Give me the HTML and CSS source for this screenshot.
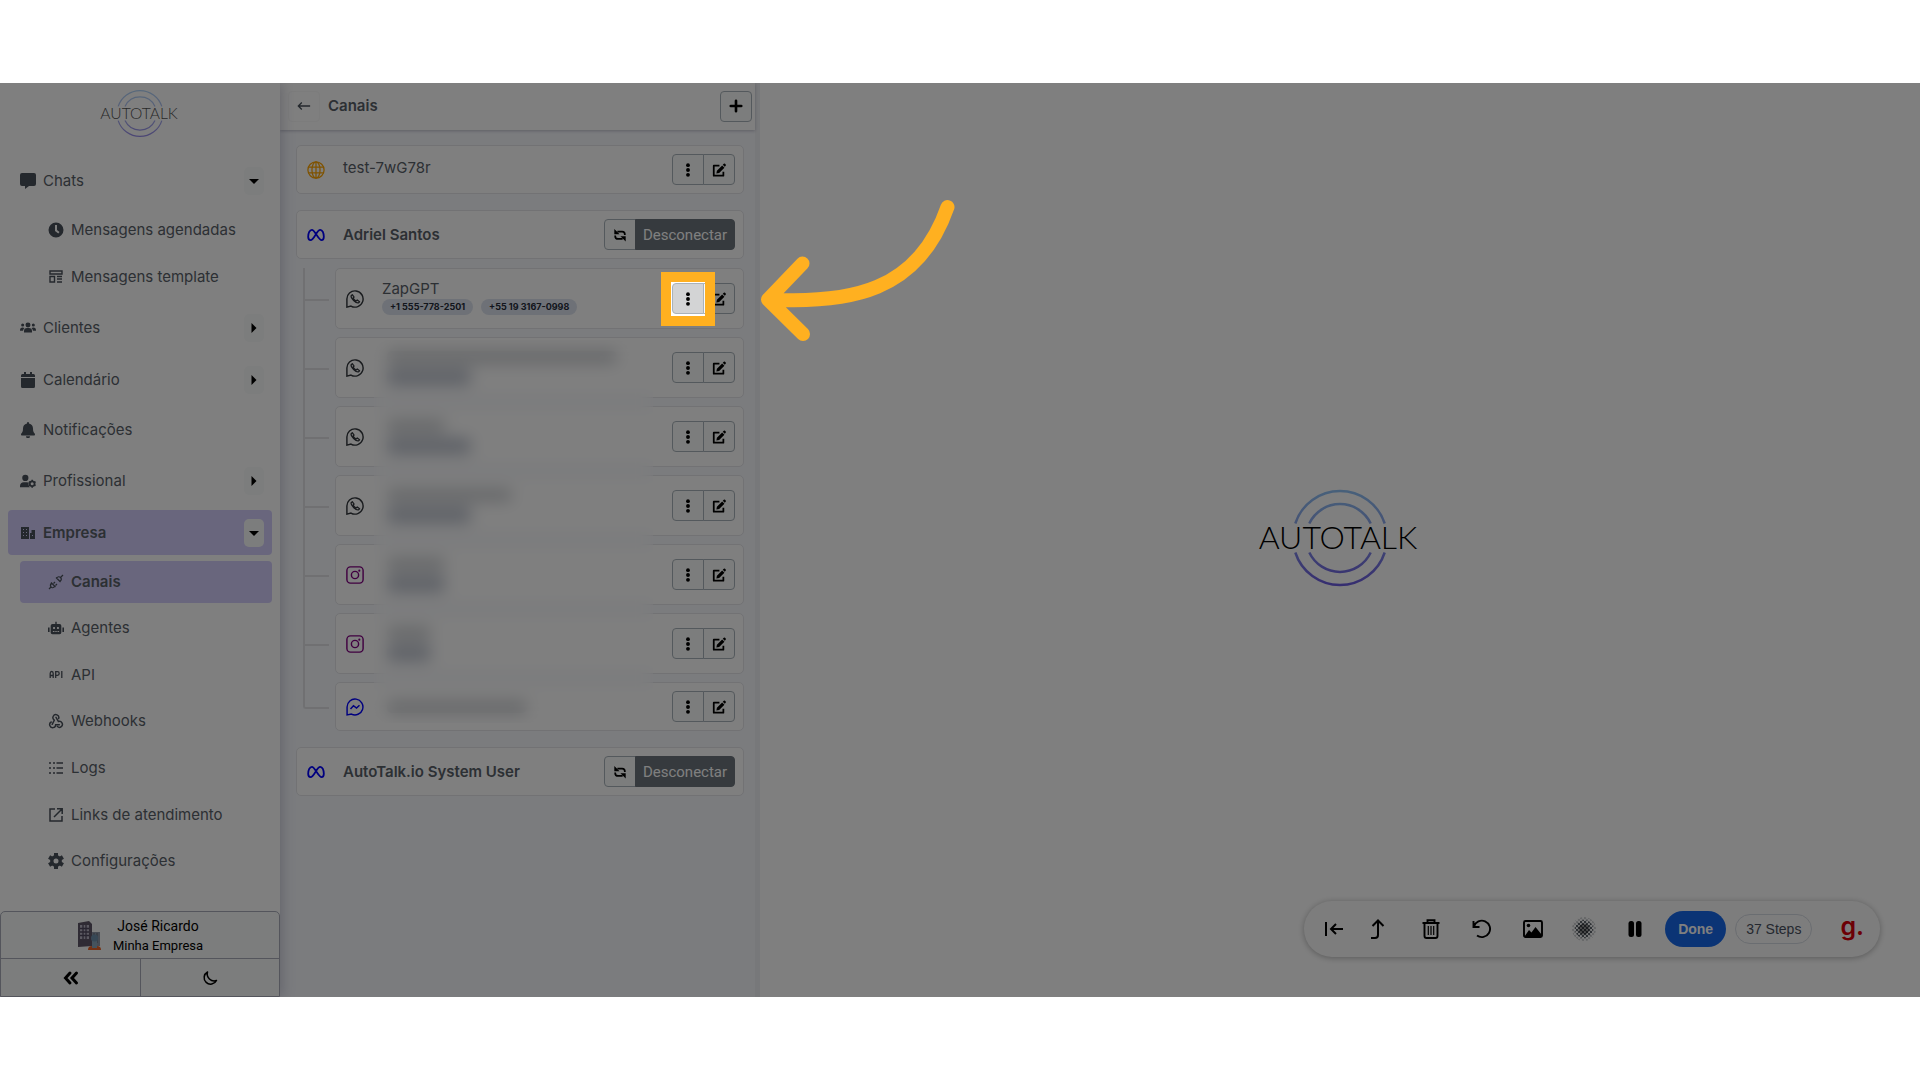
FILE: index.html
```html
<!DOCTYPE html>
<html lang="pt-BR">
  <head>
    <meta charset="UTF-8" />
    <meta name="viewport" content="width=device-width, initial-scale=1.0" />
    <title>Canais</title>
    <link rel="stylesheet" href="styles.css" />
  </head>
  <body>
    <svg class="sprite" aria-hidden="true">
      <defs>
        <linearGradient id="ring" gradientUnits="userSpaceOnUse" x1="0" y1="-47" x2="0" y2="47">
          <stop offset="0" stop-color="#8fc0f5" />
          <stop offset="0.35" stop-color="#8ba6ea" />
          <stop offset="1" stop-color="#6c5ce0" />
        </linearGradient>
        <pattern id="halftone" width="4" height="4" patternUnits="userSpaceOnUse">
          <circle cx="1" cy="1" r="1.200" />
          <circle cx="3" cy="3" r="1.200" />
        </pattern>
      </defs>
      <symbol id="i-chat" viewBox="0 0 16 16"><path d="M2 0h12a2 2 0 0 1 2 2v9a2 2 0 0 1-2 2H9l-4 3v-3H2a2 2 0 0 1-2-2V2a2 2 0 0 1 2-2z" /></symbol>
      <symbol id="i-clock" viewBox="0 0 16 16"><path fill-rule="evenodd" d="M8 .5a7.500 7.500 0 1 0 0 15 7.500 7.500 0 0 0 0-15zM7 3h2v5l2.500 2-1.200 1.500L7 9z" /></symbol>
      <symbol id="i-template" viewBox="0 0 16 16"><path d="M2 2h12v3H2zM2 7.500h4.500V13H2zM9 7.500h5M9 10h5M9 13h5" fill="none" stroke="currentColor" stroke-width="1.400" /></symbol>
      <symbol id="i-users" viewBox="0 0 18 16"><circle cx="9" cy="4.500" r="2.800" /><circle cx="3" cy="4.500" r="1.700" /><circle cx="15" cy="4.500" r="1.700" /><path d="M4.500 13v-1.500A3.500 3.500 0 0 1 8 8h2a3.500 3.500 0 0 1 3.500 3.500V13zM0 10.500A3 3 0 0 1 3 7.500l2 .500a5 5 0 0 0-1.600 3H0zM18 10.500a3 3 0 0 0-3-3l-2 .500a5 5 0 0 1 1.600 3H18z" /></symbol>
      <symbol id="i-calendar" viewBox="0 0 16 16"><path d="M4 0h2v2h4V0h2v2h1.500A1.500 1.500 0 0 1 15 3.500V5H1V3.500A1.500 1.500 0 0 1 2.500 2H4zM1 6h14v8.500a1.500 1.500 0 0 1-1.500 1.500h-11A1.500 1.500 0 0 1 1 14.500z" /></symbol>
      <symbol id="i-bell" viewBox="0 0 16 16"><path d="M7 1a1 1 0 0 1 2 0v.600c2.700.500 4 2.600 4 5 0 3 .800 4 1.700 5 .600.800.200 1.900-.800 1.900H2.100c-1 0-1.400-1.100-.800-1.900.900-1 1.700-2 1.700-5 0-2.400 1.300-4.500 4-5zM6 14.300h4a2 2 0 0 1-4 0z" /></symbol>
      <symbol id="i-usercog" viewBox="0 0 18 16"><circle cx="6" cy="4.500" r="3.500" /><path d="M0 15v-1.500C0 11 1.800 9.300 4.200 9.300h3.600c1 0 1.600.200 2.200.600-1 2 0 4 1.200 5.100z" /><circle cx="13.700" cy="11" r="2.700" fill="none" stroke="currentColor" stroke-width="2" /><path d="M13.700 6.600v1.500M13.700 14v1.500M9.900 8.800l1.300.700M16.200 12.500l1.300.700M9.900 13.200l1.300-.700M16.200 9.500l1.300-.700" stroke="currentColor" stroke-width="1.800" /></symbol>
      <symbol id="i-building" viewBox="0 0 16 16"><path fill-rule="evenodd" d="M1 2h8v12H1zM3 4v1h1V4zM6 4v1h1V4zM3 7v1h1V7zM6 7v1h1V7zM3 10v1h1v-1zM6 10v1h1v-1zM10 8h1.500V5H15v9h-5zM12 10v1h1v-1z" /></symbol>
      <symbol id="i-plug" viewBox="0 0 16 16"><g fill="none" stroke="currentColor" stroke-width="1.200"><path d="M1 15l2.500-2.500M3 8.500l4.500 4.500M3.600 9.200C1.800 10.800 2.300 12 3 13s2.300 1.200 3.800-.600M5.500 9.500l1.500-1.500M7.500 11.500l1.500-1.500M15 1l-2.500 2.500M8 3.500 12.500 8M8.600 4.200C10 2.400 11.300 2.400 12.500 3.500s1.200 2.500-.600 3.900" /></g></symbol>
      <symbol id="i-robot" viewBox="0 0 18 16"><path fill-rule="evenodd" d="M8.200 1h1.600v2.500H13a2 2 0 0 1 2 2V13a2 2 0 0 1-2 2H5a2 2 0 0 1-2-2V5.500a2 2 0 0 1 2-2h3.200zM5.800 7v2h2V7zM10.200 7v2h2V7zM5.500 11.500v1h1.800v-1zM8.200 11.500v1h1.600v-1zM10.700 11.500v1h1.800v-1zM0 7.500h1.800v5H0zM16.200 7.500H18v5h-1.800z" /></symbol>
      <symbol id="i-api" viewBox="0 0 16 16"><path d="M2.200 11V6.500q0-2 1.500-2t1.500 2V11M2.200 8.500h3M7.700 11V4.700h1.800q1.700 0 1.700 1.800t-1.700 1.800H7.700M13.800 4v7" fill="none" stroke="currentColor" stroke-width="1.300" /></symbol>
      <symbol id="i-webhook" viewBox="0 0 24 24"><path d="M4.900 13.500a4.500 4.500 0 1 0 6.600 4h5.500M9.500 10.600a4.400 4.400 0 1 1 6.500-2.400M12 6.500l3.500 6.200a4.500 4.500 0 1 1-1.400 7.600M9.500 10.600 6.300 17" fill="none" stroke="currentColor" stroke-width="2.200" stroke-linecap="round" /></symbol>
      <symbol id="i-logs" viewBox="0 0 16 16"><path d="M1 3h2M1 8h2M1 13h2M5 3h2M5 8h2M5 13h2M8.500 3H15M8.500 8H15M8.500 13H15" stroke="currentColor" stroke-width="1.500" /></symbol>
      <symbol id="i-external" viewBox="0 0 16 16"><path d="M7 2H2v12h12V9M9 1.700h5.200V7M14 2 6 10" fill="none" stroke="currentColor" stroke-width="1.500" /></symbol>
      <symbol id="i-gear" viewBox="0 0 16 16"><circle cx="8" cy="8" r="4.200" fill="none" stroke="currentColor" stroke-width="3.400" /><path d="M8 0v3M8 13v3M1.100 4l2.500 1.500M12.400 10.500l2.500 1.500M1.100 12l2.500-1.500M12.400 5.500 14.900 4" stroke="currentColor" stroke-width="4" /></symbol>
      <symbol id="i-dots" viewBox="0 0 16 16"><circle cx="8" cy="2.500" r="2.200" /><circle cx="8" cy="8" r="2.200" /><circle cx="8" cy="13.500" r="2.200" /></symbol>
      <symbol id="i-edit" viewBox="0 0 16 16"><path d="M8.500 3H2v11.500h11V10" fill="none" stroke="currentColor" stroke-width="2" stroke-linejoin="round" /><path d="M5 12l.600-3.200 6-6 2.600 2.600-6 6zM12.300 2 13.500.900q.700-.600 1.400 0l.700.700q.700.700 0 1.400L14.600 4.200z" /></symbol>
      <symbol id="i-sync" viewBox="0 0 16 16"><path d="M5 4h5.500q3 0 3 3v1M11 12.500H6q-3.500 0-3.500-3.500V8.500" fill="none" stroke="currentColor" stroke-width="2" /><path d="M1.500 1v6H7.500zM14.500 15.500v-6h-6z" /></symbol>
      <symbol id="i-globe" viewBox="0 0 20 20"><g fill="none" stroke="currentColor" stroke-width="1.400"><circle cx="10" cy="10" r="9" /><ellipse cx="10" cy="10" rx="4.500" ry="9" /><path d="M1.700 6.700h16.600M1.700 13.300h16.600M10 1v18" /></g></symbol>
      <symbol id="i-meta" viewBox="0 0 20 20"><path d="M10 9C8 5.500 7 4.200 5.400 4.200 3 4.200 1.300 8 1.300 12c0 2.300 1 3.700 2.700 3.700 2 0 3.500-2.700 6-6.700 1.600-3 3-4.800 4.800-4.800 2.300 0 3.900 3.800 3.900 7.800 0 2.300-.900 3.700-2.500 3.700-2 0-3.600-3-6.200-6.700z" fill="none" stroke="currentColor" stroke-width="2" /></symbol>
      <symbol id="i-whatsapp" viewBox="0 0 20 20"><path d="M1 19V10.500a9 9 0 1 1 4.500 7.300z" fill="none" stroke="currentColor" stroke-width="1.600" /><path d="M7 5.200 5.700 6.400c-.700 2.600 5.300 8.800 8.200 7.900l1.200-1.300-2.600-1.900-1.300 1.100c-1.400-.600-2.700-2-3.300-3.300L9 7.800z" fill="none" stroke="currentColor" stroke-width="1.400" stroke-linejoin="round" /></symbol>
      <symbol id="i-instagram" viewBox="0 0 20 20"><g fill="none" stroke="currentColor" stroke-width="1.600"><rect x="1" y="1" width="18" height="18" rx="4" /><circle cx="10" cy="10" r="4" /></g><circle cx="14.800" cy="5.200" r="1.200" /></symbol>
      <symbol id="i-messenger" viewBox="0 0 20 20"><g fill="none" stroke="currentColor" stroke-width="1.600"><path d="M1.200 18.800V10a8.800 8.800 0 1 1 4.800 7.800z" /><path d="M5 12.200 8.300 8.500l3.400 2.700L15 8" /></g></symbol>
      <symbol id="i-left" viewBox="0 0 16 16"><path d="M15 8H2M5.500 4 1.500 8l4 4" fill="none" stroke="currentColor" stroke-width="1.500" /></symbol>
      <symbol id="i-plus" viewBox="0 0 16 16"><path d="M8 2v12M2 8h12" stroke="currentColor" stroke-width="3" stroke-linecap="round" /></symbol>
      <symbol id="i-down" viewBox="0 0 10 10"><path d="M0 3h10L5 8z" /></symbol>
      <symbol id="i-right" viewBox="0 0 10 10"><path d="M2.500 0v10l5-5z" /></symbol>
      <symbol id="i-collapse" viewBox="0 0 16 16"><path d="M7 3 2.500 8 7 13M13.500 3 9 8l4.500 5" fill="none" stroke="currentColor" stroke-width="3" stroke-linecap="round" /></symbol>
      <symbol id="i-moon" viewBox="0 0 16 16"><path d="M5.500 2a6.500 6.500 0 1 0 9 8.500A7 7 0 0 1 5.500 2z" fill="none" stroke="currentColor" stroke-width="1.500" stroke-linejoin="round" /></symbol>
      <symbol id="i-tostart" viewBox="0 0 20 20"><path d="M2 3v14M19 10H7M12 5l-5 5 5 5" fill="none" stroke="currentColor" stroke-width="2" /></symbol>
      <symbol id="i-turnup" viewBox="0 0 20 20"><path d="M3 19h4q3 0 3-3V2M4.500 7 10 1.500 15.500 7" fill="none" stroke="currentColor" stroke-width="2" /></symbol>
      <symbol id="i-trash" viewBox="0 0 20 20"><path d="M1.500 4h17M6.500 4V1.200h7V4M3.500 4v13q0 2 2 2h9q2 0 2-2V4" fill="none" stroke="currentColor" stroke-width="1.900" /><path d="M7.300 7v9M10 7v9M12.700 7v9" stroke="currentColor" stroke-width="1.200" /></symbol>
      <symbol id="i-undo" viewBox="0 0 20 20"><path d="M1.500 2v6h6M2 7.500a8.200 8.200 0 1 1 3 9" fill="none" stroke="currentColor" stroke-width="1.900" /></symbol>
      <symbol id="i-image" viewBox="0 0 20 20"><rect x="1" y="2" width="18" height="16" rx="1.500" fill="none" stroke="currentColor" stroke-width="1.900" /><circle cx="5.500" cy="6.500" r="1.800" /><path d="M1.500 17.500 6 11l2.500 2.500L12.500 8l6 7.500v2z" /></symbol>
      <symbol id="i-halftone" viewBox="0 0 24 24"><circle cx="12" cy="12" r="12" fill="url(#halftone)" opacity="0.300" /><circle cx="12" cy="12" r="9" fill="url(#halftone)" /><circle cx="12" cy="12" r="5.500" opacity="0.400" /></symbol>
      <symbol id="i-pause" viewBox="0 0 20 20"><rect x="3.500" y="2" width="5.500" height="16" rx="2.500" /><rect x="11" y="2" width="5.500" height="16" rx="2.500" /></symbol>
    </svg>

    <div class="app">
      <aside class="sidebar">
        <svg class="brand" viewBox="-86 -50 172 100" role="img" aria-label="Autotalk">
          <path class="rings" d="M-44.700-14.500A47 47 0 0 1 44.700-14.500M-30.700-14.500A34 34 0 0 1 30.700-14.500M-44.700 14.500A47 47 0 0 0 44.700 14.500M-30.700 14.500A34 34 0 0 0 30.700 14.500" />
          <text x="-2" y="11" text-anchor="middle">AUTOTALK</text>
        </svg>
        <nav class="menu">
          <div class="item">
            <svg class="icon"><use href="#i-chat" /></svg><a href="#chats">Chats</a>
            <button class="toggle" aria-label="Recolher Chats"><svg><use href="#i-down" /></svg></button>
          </div>
          <div class="submenu">
            <a href="#agendadas"><svg class="icon"><use href="#i-clock" /></svg>Mensagens agendadas</a>
            <a href="#template"><svg class="icon"><use href="#i-template" /></svg>Mensagens template</a>
          </div>
          <div class="item">
            <svg class="icon"><use href="#i-users" /></svg><a href="#clientes">Clientes</a>
            <button class="toggle" aria-label="Abrir Clientes"><svg><use href="#i-right" /></svg></button>
          </div>
          <div class="item">
            <svg class="icon"><use href="#i-calendar" /></svg><a href="#calendario">Calendário</a>
            <button class="toggle" aria-label="Abrir Calendário"><svg><use href="#i-right" /></svg></button>
          </div>
          <div class="item plain">
            <svg class="icon"><use href="#i-bell" /></svg><a href="#notificacoes">Notificações</a>
          </div>
          <div class="item">
            <svg class="icon"><use href="#i-usercog" /></svg><a href="#profissional">Profissional</a>
            <button class="toggle" aria-label="Abrir Profissional"><svg><use href="#i-right" /></svg></button>
          </div>
          <div class="item active">
            <svg class="icon"><use href="#i-building" /></svg><a href="#empresa">Empresa</a>
            <button class="toggle" aria-label="Recolher Empresa"><svg><use href="#i-down" /></svg></button>
          </div>
          <div class="submenu company">
            <a class="active" href="#canais"><svg class="icon"><use href="#i-plug" /></svg>Canais</a>
            <a href="#agentes"><svg class="icon"><use href="#i-robot" /></svg>Agentes</a>
            <a href="#api"><svg class="icon"><use href="#i-api" /></svg>API</a>
            <a href="#webhooks"><svg class="icon"><use href="#i-webhook" /></svg>Webhooks</a>
            <a href="#logs"><svg class="icon"><use href="#i-logs" /></svg>Logs</a>
            <a href="#links"><svg class="icon"><use href="#i-external" /></svg>Links de atendimento</a>
            <a href="#config"><svg class="icon"><use href="#i-gear" /></svg>Configurações</a>
          </div>
        </nav>
        <div class="account">
          <button class="user">
            <svg class="avatar" viewBox="0 0 24 30" aria-hidden="true">
              <path d="M1 2 12 0l3 3v22L1 26z" fill="#5f5668" />
              <path d="M3 4h9v14H3z" fill="#b8b4c4" />
              <path d="M3 7.500h9M3 11h9M3 14.500h9M6 4v14M9 4v14" stroke="#514a60" stroke-width="1.300" />
              <path d="M15 11h8v14h-8z" fill="#8f98a8" />
              <path d="M17 12v10M20 12v10" stroke="#5d6676" />
              <path d="M11 29q0-4 4-4h5q4 0 4 4z" fill="#e8642a" />
              <path d="M15 27V21q-1-7 2.500-7t2.500 7v6z" fill="#8ba6ba" />
              <circle cx="17.500" cy="17" r="3.500" fill="#6e91ad" />
            </svg>
            <span class="who"><span>José Ricardo</span><small>Minha Empresa</small></span>
          </button>
          <div class="tools">
            <button aria-label="Recolher menu"><svg><use href="#i-collapse" /></svg></button>
            <button aria-label="Modo escuro"><svg><use href="#i-moon" /></svg></button>
          </div>
        </div>
      </aside>

      <section class="panel">
        <header>
          <button class="back" aria-label="Voltar"><svg><use href="#i-left" /></svg></button>
          <h1>Canais</h1>
          <button class="btn" aria-label="Adicionar canal"><svg><use href="#i-plus" /></svg></button>
        </header>
        <div class="channels">
          <div class="card">
            <svg class="type web"><use href="#i-globe" /></svg>
            <span class="name">test-7wG78r</span>
            <div class="group">
              <button class="btn" aria-label="Opções"><svg><use href="#i-dots" /></svg></button>
              <button class="btn" aria-label="Editar"><svg><use href="#i-edit" /></svg></button>
            </div>
          </div>
          <div class="account-block">
            <div class="card">
              <svg class="type meta"><use href="#i-meta" /></svg>
              <strong class="name">Adriel Santos</strong>
              <div class="group">
                <button class="btn" aria-label="Sincronizar"><svg><use href="#i-sync" /></svg></button>
                <button class="btn dark">Desconectar</button>
              </div>
            </div>
            <ul class="tree">
              <li>
                <div class="card tall">
                  <svg class="type"><use href="#i-whatsapp" /></svg>
                  <div class="info">
                    <span>ZapGPT</span>
                    <div class="numbers"><span class="badge">+1 555-778-2501</span><span class="badge">+55 19 3167-0998</span></div>
                  </div>
                  <div class="group">
                    <button class="btn spot" aria-label="Opções"><svg><use href="#i-dots" /></svg></button>
                    <button class="btn" aria-label="Editar"><svg><use href="#i-edit" /></svg></button>
                    <div class="highlight">
                      <svg class="arrow" viewBox="0 0 200 152" aria-hidden="true">
                        <path d="M8 103.500C90 108 158 96 187.500 11M42.500 67.500 8 103.500 43 138" />
                      </svg>
                    </div>
                  </div>
                </div>
              </li>
              <li>
                <div class="card tall">
                  <svg class="type"><use href="#i-whatsapp" /></svg>
                  <div class="info"><i class="line w-xl"></i><i class="pill w-m"></i></div>
                  <div class="group">
                    <button class="btn" aria-label="Opções"><svg><use href="#i-dots" /></svg></button>
                    <button class="btn" aria-label="Editar"><svg><use href="#i-edit" /></svg></button>
                  </div>
                </div>
              </li>
              <li>
                <div class="card tall">
                  <svg class="type"><use href="#i-whatsapp" /></svg>
                  <div class="info"><i class="line w-s"></i><i class="pill w-m"></i></div>
                  <div class="group">
                    <button class="btn" aria-label="Opções"><svg><use href="#i-dots" /></svg></button>
                    <button class="btn" aria-label="Editar"><svg><use href="#i-edit" /></svg></button>
                  </div>
                </div>
              </li>
              <li>
                <div class="card tall">
                  <svg class="type"><use href="#i-whatsapp" /></svg>
                  <div class="info"><i class="line w-l"></i><i class="pill w-m"></i></div>
                  <div class="group">
                    <button class="btn" aria-label="Opções"><svg><use href="#i-dots" /></svg></button>
                    <button class="btn" aria-label="Editar"><svg><use href="#i-edit" /></svg></button>
                  </div>
                </div>
              </li>
              <li>
                <div class="card tall">
                  <svg class="type insta"><use href="#i-instagram" /></svg>
                  <div class="info"><i class="line w-s"></i><i class="pill w-s"></i></div>
                  <div class="group">
                    <button class="btn" aria-label="Opções"><svg><use href="#i-dots" /></svg></button>
                    <button class="btn" aria-label="Editar"><svg><use href="#i-edit" /></svg></button>
                  </div>
                </div>
              </li>
              <li>
                <div class="card tall">
                  <svg class="type insta"><use href="#i-instagram" /></svg>
                  <div class="info"><i class="line w-xs"></i><i class="pill w-xs"></i></div>
                  <div class="group">
                    <button class="btn" aria-label="Opções"><svg><use href="#i-dots" /></svg></button>
                    <button class="btn" aria-label="Editar"><svg><use href="#i-edit" /></svg></button>
                  </div>
                </div>
              </li>
              <li>
                <div class="card">
                  <svg class="type meta"><use href="#i-messenger" /></svg>
                  <div class="info"><i class="line w-lg"></i></div>
                  <div class="group">
                    <button class="btn" aria-label="Opções"><svg><use href="#i-dots" /></svg></button>
                    <button class="btn" aria-label="Editar"><svg><use href="#i-edit" /></svg></button>
                  </div>
                </div>
              </li>
              <li class="redact" aria-hidden="true"></li>
            </ul>
          </div>
          <div class="card">
            <svg class="type meta"><use href="#i-meta" /></svg>
            <strong class="name">AutoTalk.io System User</strong>
            <div class="group">
              <button class="btn" aria-label="Sincronizar"><svg><use href="#i-sync" /></svg></button>
              <button class="btn dark">Desconectar</button>
            </div>
          </div>
        </div>
      </section>

      <main class="content">
        <svg class="watermark" viewBox="-86 -50 172 100" role="img" aria-label="Autotalk">
          <path class="rings" d="M-44.700-14.500A47 47 0 0 1 44.700-14.500M-30.700-14.500A34 34 0 0 1 30.700-14.500M-44.700 14.500A47 47 0 0 0 44.700 14.500M-30.700 14.500A34 34 0 0 0 30.700 14.500" />
          <text x="-2" y="11" text-anchor="middle">AUTOTALK</text>
        </svg>
      </main>

      <div class="recorder">
        <div class="nav">
          <button aria-label="Start"><svg><use href="#i-tostart" /></svg></button>
          <button aria-label="Step"><svg><use href="#i-turnup" /></svg></button>
        </div>
        <button aria-label="Delete"><svg><use href="#i-trash" /></svg></button>
        <button aria-label="Undo"><svg><use href="#i-undo" /></svg></button>
        <button aria-label="Screenshot"><svg><use href="#i-image" /></svg></button>
        <button aria-label="Blur"><svg class="large"><use href="#i-halftone" /></svg></button>
        <button aria-label="Pause"><svg><use href="#i-pause" /></svg></button>
        <button class="done">Done</button>
        <span class="steps">37 Steps</span>
        <span class="guide">g.</span>
      </div>
    </div>
  </body>
</html>
```

FILE: styles.css
```css
* {
  box-sizing: border-box;
}
body {
  margin: 0;
  min-height: 100vh;
  display: flex;
  align-items: center;
  background: #fff;
  color: #596068;
  font: 15px/20px Inter, sans-serif;
}
button {
  font: inherit;
  color: #000;
  padding: 0;
  border: 0;
  background: none;
}
a {
  color: inherit;
  text-decoration: none;
}
svg {
  display: block;
  fill: currentColor;
}
.sprite {
  position: absolute;
  width: 0;
  height: 0;
}
.app {
  position: relative;
  overflow: hidden;
  width: 100%;
  min-height: 914px;
  display: grid;
  grid-template-columns: 280px 480px 1fr;
}

/* sidebar */
.sidebar {
  position: relative;
  z-index: 1;
  display: flex;
  flex-direction: column;
  background: #fff;
  box-shadow: 2px 0 12px rgba(60, 60, 100, 0.25);
}
.brand {
  width: 84px;
  height: 49px;
  margin: 6px auto 20px;
  opacity: 0.7;
  color: #000;
}
.brand text,
.watermark text {
  font: 300 32px Lato, sans-serif;
}
.rings {
  fill: none;
  stroke: url(#ring);
  stroke-width: 2.5;
}
.menu {
  display: flex;
  flex-direction: column;
  gap: 7px;
  padding: 0 8px;
}
.item {
  display: flex;
  align-items: center;
  gap: 7px;
  height: 45px;
  padding: 0 8px 0 12px;
  border-radius: 4px;
}
.item.plain {
  height: 42px;
}
.item a {
  flex: 1;
}
.icon {
  width: 16px;
  height: 16px;
  color: #49505a;
}
.toggle {
  width: 20px;
  height: 28px;
  display: grid;
  place-items: center;
  border-radius: 5px;
  background: #f9fbfa;
}
.toggle svg {
  width: 10px;
  height: 10px;
}
.active {
  background: #d2cdfa;
  font-weight: 600;
}
.submenu {
  display: flex;
  flex-direction: column;
  justify-content: space-between;
  gap: 4px;
  min-height: 89px;
  margin: -1px 0 0 12px;
}
.submenu.company {
  min-height: 322px;
}
.submenu a {
  display: flex;
  align-items: center;
  gap: 7px;
  height: 42px;
  padding: 0 0 1px 28px;
  border-radius: 4px;
}
.account {
  margin-top: auto;
  border: 1px solid #a8abb8;
  border-radius: 5px 5px 0 0;
  background: #f9fbfa;
}
.user {
  width: 100%;
  height: 47px;
  display: flex;
  align-items: center;
  justify-content: center;
  gap: 12px;
  padding-top: 2px;
  border-bottom: 1px solid #a8abb8;
}
.avatar {
  width: 24px;
  height: 30px;
}
.who {
  display: grid;
  font: 14px/20px Roboto, sans-serif;
}
.who small {
  font-size: 13px;
}
.tools {
  display: grid;
  grid-template-columns: 1fr 1fr;
  height: 37px;
}
.tools button {
  display: grid;
  place-items: center;
}
.tools button + button {
  border-left: 1px solid #a8abb8;
}
.tools svg {
  width: 16px;
  height: 16px;
}

/* channel list */
.panel {
  background: #f6f8fd;
  border-right: 5px solid #eff0f4;
}
.panel header {
  display: flex;
  align-items: center;
  height: 47px;
  padding: 0 3px 1px 8px;
  background: #fff;
  box-shadow: 0 1px 3px rgba(60, 60, 90, 0.3);
}
.panel h1 {
  flex: 1;
  margin: 0 0 0 8px;
  font-size: 15px;
  font-weight: 600;
}
.btn,
.back {
  width: 32px;
  height: 31px;
  display: grid;
  place-items: center;
  border: 1px solid #a9b2ba;
  border-radius: 4px;
  background: #f9fbfa;
}
.back {
  border-color: #f8f8f8;
  background: #fff;
  color: #49505a;
}
.back svg,
.btn svg {
  width: 14px;
  height: 14px;
}
.channels {
  display: grid;
  gap: 16px;
  padding: 15px 11px 15px 16px;
}
.card {
  display: flex;
  align-items: center;
  height: 49px;
  padding: 0 8px 0 10px;
  border: 1px solid #e4e5e9;
  border-radius: 5px;
  background: #fff;
}
.card.tall {
  height: 61px;
}
.type {
  width: 18px;
  height: 18px;
  margin-right: 18px;
  color: #33373c;
}
.type.web {
  color: #ffa500;
}
.type.meta {
  color: #00f;
}
.type.insta {
  color: #800080;
}
.name {
  flex: 1;
  padding-bottom: 4px;
  font-weight: 400;
}
strong.name {
  padding: 0;
  font-weight: 600;
}
.group {
  position: relative;
  display: flex;
}
.group .btn:nth-child(1) {
  border-radius: 4px 0 0 4px;
}
.group .btn:nth-child(2) {
  margin-left: -1px;
  border-radius: 0 4px 4px 0;
}
.group .dark {
  width: 100px;
  border-color: #6c757d;
  background: #6c757d;
  color: #fff;
  font-family: Roboto, sans-serif;
}
.group .spot {
  background: #d3d4d5;
}

.tree {
  position: relative;
  display: grid;
  gap: 8px;
  margin: 9px 0 0;
  padding: 0;
  list-style: none;
}
.tree li {
  position: relative;
  padding-left: 39px;
}
.tree li::before {
  content: "";
  position: absolute;
  left: 7px;
  top: 0;
  width: 24px;
  height: 50%;
  border: solid #e0e1e5;
  border-width: 0 0 2px 2px;
}
.tree li:not(:nth-child(7))::after {
  content: "";
  position: absolute;
  left: 7px;
  top: 50%;
  bottom: -8px;
  border-left: 2px solid #e0e1e5;
}
.tree li:nth-child(7)::before {
  border-bottom-left-radius: 3px;
}
.info {
  flex: 1;
}
.info > span,
.info > i {
  display: block;
}
.info > span {
  margin-top: -4px;
}
.numbers {
  display: flex;
  gap: 8px;
}
.badge {
  padding: 0 8px;
  border-radius: 8px;
  background: #dde3ee;
  color: #262c3a;
  font-size: 9px;
  font-weight: 700;
  line-height: 16px;
}

/* blurred private names */
.line,
.pill {
  height: 12px;
  margin: 0 0 6px 5px;
  border-radius: 5px;
  background: #c9ccd0;
}
.pill {
  height: 16px;
  margin-bottom: 0;
  background: #bbc1cd;
}
.w-xl {
  width: 230px;
}
.w-lg {
  width: 140px;
}
.w-l {
  width: 125px;
}
.w-m {
  width: 84px;
}
.w-s {
  width: 58px;
}
.w-xs {
  width: 44px;
}
.card:not(.tall) .line {
  margin-bottom: 0;
}
.tree .redact {
  position: absolute;
  left: 78px;
  right: 91px;
  top: 72px;
  bottom: 8px;
  padding: 0;
  backdrop-filter: blur(8px);
}
.tree .redact::before,
.tree .redact::after {
  display: none;
}

/* guide step marker: its shadow dims the rest of the app */
.highlight {
  position: absolute;
  z-index: 10;
  left: -11px;
  top: -11px;
  width: 54px;
  height: 54px;
  border: 10px solid #ffb020;
  box-shadow: 0 0 0 2000px rgba(0, 0, 0, 0.5);
}
.arrow {
  position: absolute;
  left: 89px;
  top: -86px;
  width: 200px;
  height: 152px;
}
.arrow path {
  fill: none;
  stroke: #ffb020;
  stroke-width: 14;
  stroke-linecap: round;
  stroke-linejoin: round;
}

.content {
  display: grid;
  place-items: center;
  padding-bottom: 4px;
  background: #fff;
}
.watermark {
  width: 172px;
  height: 100px;
  color: #000;
}

/* recorder bar */
.recorder {
  position: absolute;
  right: 40px;
  bottom: 40px;
  height: 56px;
  display: flex;
  align-items: center;
  padding: 0 16px 0 8px;
  border-radius: 28px;
  background: #fbfbfb;
  box-shadow: 0 1px 6px rgba(0, 0, 0, 0.3);
  font: 14px/20px "Liberation Sans", sans-serif;
}
.recorder .nav {
  display: flex;
  margin-right: 5px;
}
.recorder button {
  width: 51px;
  display: grid;
  place-items: center;
}
.recorder .nav button {
  width: 44px;
}
.recorder svg {
  width: 20px;
  height: 20px;
}
.recorder svg.large {
  width: 24px;
  height: 24px;
}
.recorder .done {
  width: 61px;
  height: 36px;
  margin-left: 5px;
  border-radius: 18px;
  background: #1668ea;
  color: #fff;
  font-weight: 700;
}
.steps {
  margin-left: 9px;
  padding: 4px 10px;
  border: 1px solid #d5dae2;
  border-radius: 15px;
  color: #4a5160;
}
.guide {
  margin: -6px 0 0 28px;
  color: #d8000c;
  font: 600 25px/30px Inter, sans-serif;
}
```
